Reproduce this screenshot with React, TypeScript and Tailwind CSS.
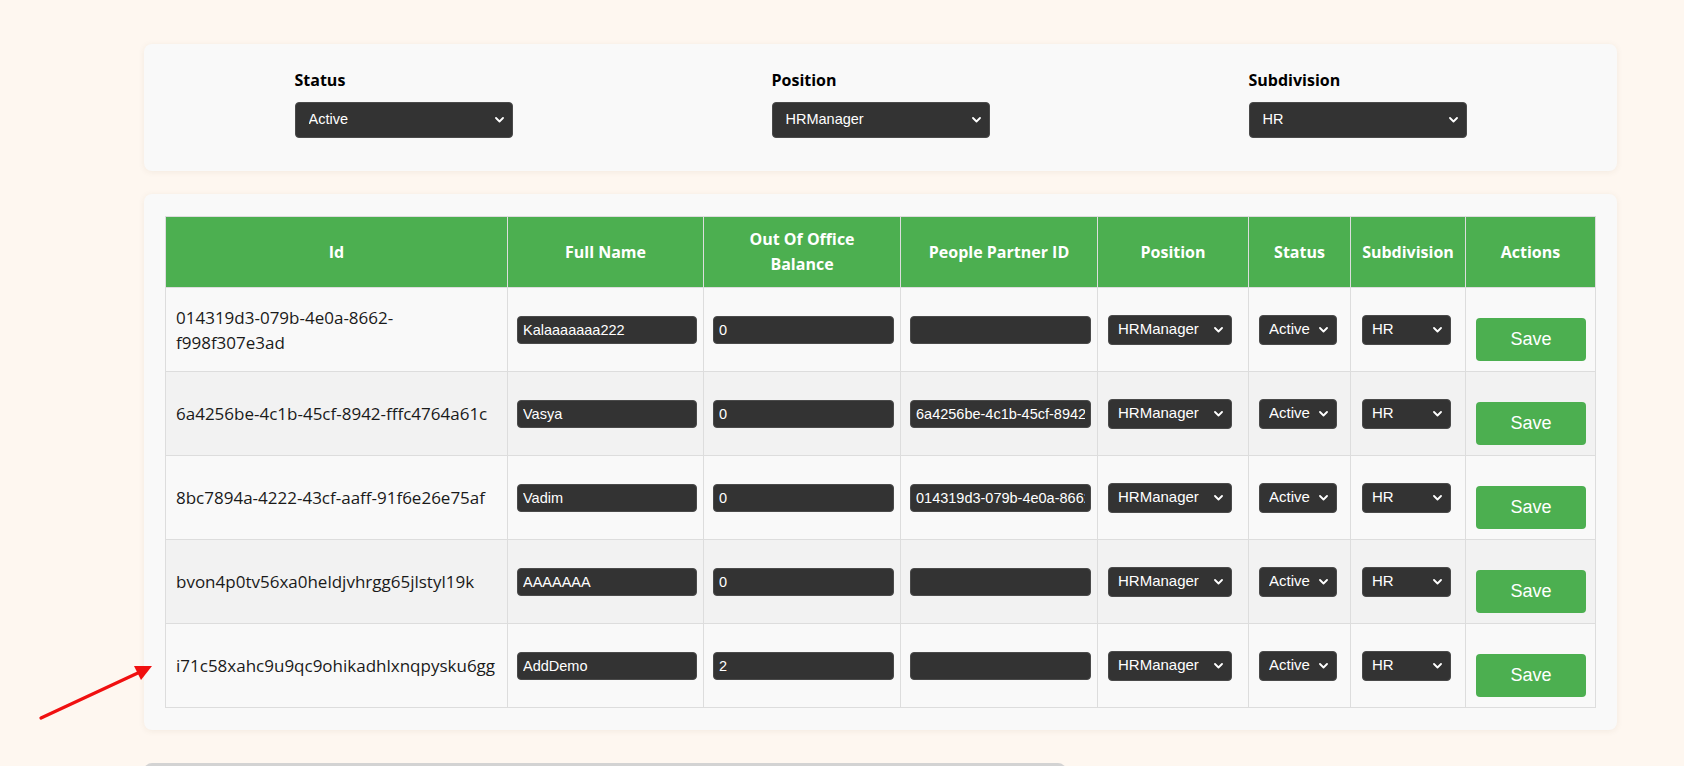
import { ChevronDown } from 'lucide-react';

const rows = [
    { id: '014319d3-079b-4e0a-8662-f998f307e3ad', name: 'Kalaaaaaaa222', balance: '0', partner: '' },
    { id: '6a4256be-4c1b-45cf-8942-fffc4764a61c', name: 'Vasya', balance: '0', partner: '6a4256be-4c1b-45cf-8942-fffc4764a61c' },
    { id: '8bc7894a-4222-43cf-aaff-91f6e26e75af', name: 'Vadim', balance: '0', partner: '014319d3-079b-4e0a-8662-f998f307e3ad' },
    { id: 'bvon4p0tv56xa0heldjvhrgg65jlstyl19k', name: 'AAAAAAA', balance: '0', partner: '' },
    { id: 'i71c58xahc9u9qc9ohikadhlxnqpysku6gg', name: 'AddDemo', balance: '2', partner: '' },
];

const Chevron = () => (
    <svg width="9" height="6" viewBox="0 0 9 6" className="pointer-events-none absolute right-[9px] top-1/2 -translate-y-1/2">
        <path d="M1 1 L4.5 4.5 L8 1" fill="none" stroke="white" strokeWidth="1.8" strokeLinecap="round" strokeLinejoin="round" />
    </svg>
);

const DarkSelect = ({ value, options, className, textClass }: { value: string; options: string[]; className: string; textClass: string }) => (
    <div className={`relative inline-block ${className}`}>
        <select
            defaultValue={value}
            className={`h-full w-full appearance-none rounded-[4px] border border-[#4a4a4a] bg-[#333] ${textClass} text-white outline-none font-['Liberation_Sans',Arial,sans-serif]`}
        >
            {options.map((o) => (
                <option key={o}>{o}</option>
            ))}
        </select>
        <Chevron />
    </div>
);

const DarkInput = ({ value }: { value: string }) => (
    <input
        defaultValue={value}
        className="block h-[28px] w-full rounded-[4px] border border-[#4a4a4a] bg-[#333] px-[5px] text-[14.5px] text-white outline-none font-['Liberation_Sans',Arial,sans-serif]"
    />
);

const Filter = ({ label, value, options }: { label: string; value: string; options: string[] }) => (
    <div className="flex justify-center">
        <div className="w-[218px]">
            <label className="block text-[16px] font-bold leading-[24px] text-black">{label}</label>
            <DarkSelect value={value} options={options} className="mt-[10px] h-[36px] w-[218px]" textClass="pl-[13px] text-[14.5px]" />
        </div>
    </div>
);

const headers = ['Id', 'Full Name', 'Out Of Office Balance', 'People Partner ID', 'Position', 'Status', 'Subdivision', 'Actions'];
const widths = ['w-[342px]', 'w-[196px]', 'w-[197px]', 'w-[197px]', 'w-[151px]', 'w-[102px]', 'w-[115px]', 'w-[130px]'];

const App = () => {
    return (
        <main className="relative min-h-screen overflow-hidden bg-[#fef7f0] pt-[44px] font-['Segoe_UI','Open_Sans',sans-serif] text-[#1a1a1a]">
            {/* Filters */}
            <section className="ml-[144px] w-[1473px] rounded-[8px] bg-[#f9f9f9] px-[21px] pt-[24px] pb-[33px] shadow-[0_1px_6px_rgba(120,80,40,0.08)]">
                <div className="grid grid-cols-3">
                    <Filter label="Status" value="Active" options={['Active', 'Inactive']} />
                    <Filter label="Position" value="HRManager" options={['HRManager', 'ProjectManager', 'Employee']} />
                    <Filter label="Subdivision" value="HR" options={['HR', 'IT', 'Finance']} />
                </div>
            </section>

            {/* Employees table */}
            <section className="mt-[23px] ml-[144px] w-[1473px] rounded-[8px] bg-[#f9f9f9] px-[21px] py-[22px] shadow-[0_1px_6px_rgba(120,80,40,0.08)]">
                <table className="w-[1431px] table-fixed border-collapse">
                    <colgroup>
                        {widths.map((w, i) => (
                            <col key={i} className={w} />
                        ))}
                    </colgroup>
                    <thead>
                        <tr className="h-[71px] bg-[#4caf50]">
                            {headers.map((h) => (
                                <th key={h} className="border border-[#ddd] px-[8px] text-center text-[16px] font-bold leading-[25px] text-white">
                                    {h === 'Out Of Office Balance' ? <span className="inline-block w-[130px]">{h}</span> : h}
                                </th>
                            ))}
                        </tr>
                    </thead>
                    <tbody>
                        {rows.map((r, idx) => (
                            <tr key={r.id} className={`h-[84px] ${idx % 2 === 1 ? 'bg-[#f2f2f2]' : 'bg-[#f9f9f9]'}`}>
                                <td className="border border-[#ddd] px-[10px] text-[17px] leading-[25px]">
                                    <span className={idx === 0 ? 'inline-block w-[290px]' : ''}>{r.id}</span>
                                </td>
                                <td className="border border-[#ddd] pl-[9px] pr-[6px]">
                                    <DarkInput value={r.name} />
                                </td>
                                <td className="border border-[#ddd] pl-[9px] pr-[6px]">
                                    <DarkInput value={r.balance} />
                                </td>
                                <td className="border border-[#ddd] pl-[9px] pr-[6px]">
                                    <DarkInput value={r.partner} />
                                </td>
                                <td className="border border-[#ddd] px-[10px]">
                                    <DarkSelect value="HRManager" options={['HRManager', 'ProjectManager', 'Employee']} className="block h-[30px] w-[124px]" textClass="pl-[9px] text-[15px]" />
                                </td>
                                <td className="border border-[#ddd] px-[10px]">
                                    <DarkSelect value="Active" options={['Active', 'Inactive']} className="block h-[30px] w-[78px]" textClass="pl-[9px] text-[15px]" />
                                </td>
                                <td className="border border-[#ddd] px-[11px]">
                                    <DarkSelect value="HR" options={['HR', 'IT', 'Finance']} className="block h-[30px] w-[89px]" textClass="pl-[9px] text-[15px]" />
                                </td>
                                <td className="border border-[#ddd] px-[10px]">
                                    <button className="mt-[20px] block h-[43px] w-[110px] rounded-[4px] bg-[#4caf50] text-[18px] text-white font-['Liberation_Sans',Arial,sans-serif]">
                                        Save
                                    </button>
                                </td>
                            </tr>
                        ))}
                    </tbody>
                </table>
            </section>

            {/* next panel peeking in */}
            <div className="mt-[33px] ml-[144px] h-[10px] w-[922px] rounded-t-[8px] bg-[#d3d3d3]" />

            {/* annotation arrow */}
            <svg className="pointer-events-none absolute left-0 top-0" width="200" height="766">
                <line x1="41" y1="718" x2="140" y2="672" stroke="#f01010" strokeWidth="3.2" strokeLinecap="round" />
                <polygon points="152,666 134,666 141,680" fill="#f01010" />
            </svg>
        </main>
    );
};

export default App;
